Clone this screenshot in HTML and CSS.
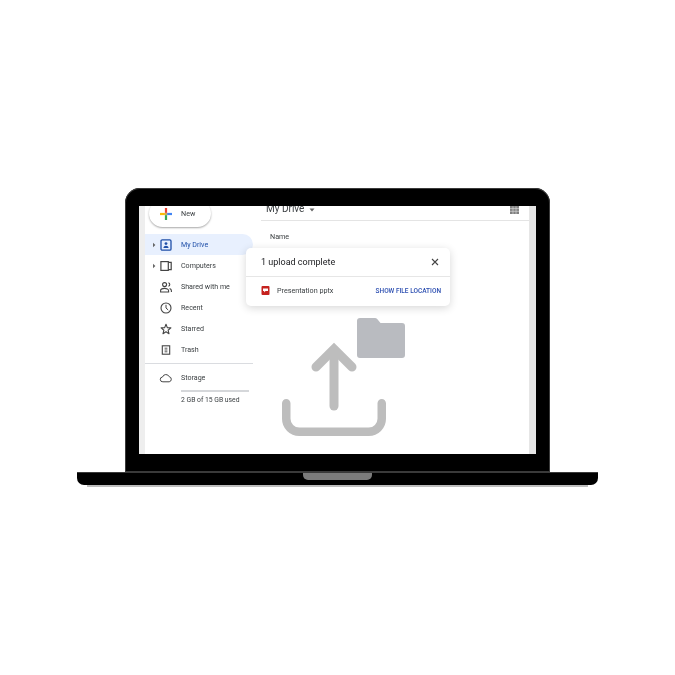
FILE: index.html
```html
<!DOCTYPE html>
<html lang="en">
<head>
<meta charset="utf-8">
<title>Drive upload</title>
<link rel="stylesheet" href="styles.css">
</head>
<body>
<div class="laptop">
  <div class="lid">
    <div class="screen">
      <aside class="sidebar">
        <div class="new-row">
          <div class="new-btn">
            <svg class="plus" viewBox="0 0 13 13"><rect x="5.300" y="0" width="2.400" height="5.300" fill="#ea4335"/><rect x="7.700" y="5.300" width="5.300" height="2.400" fill="#4285f4"/><rect x="5.300" y="7.700" width="2.400" height="5.300" fill="#34a853"/><rect x="0" y="5.300" width="5.300" height="2.400" fill="#fbbc05"/><rect x="5.300" y="5.300" width="2.400" height="2.400" fill="#c9a95a"/></svg>
            <span>New</span>
          </div>
        </div>
        <nav class="nav">
          <div class="nav-item active">
            <svg class="caret" viewBox="0 0 4 6"><path d="M1 .8 3.400 3 1 5.200z"/></svg>
            <svg class="ico" viewBox="0 0 14 14"><rect x="2" y="1.800" width="10" height="10.400" rx="1.200" fill="none" stroke="#1f4fa8" stroke-width="1.300"/><circle cx="7" cy="5.600" r="1.400" fill="#1f4fa8"/><path d="M4.400 10c.2-1.500 1.300-2.200 2.600-2.200s2.400.7 2.600 2.200z" fill="#1f4fa8"/></svg>
            <span class="label">My Drive</span>
          </div>
          <div class="nav-item">
            <svg class="caret" viewBox="0 0 4 6"><path d="M1 .8 3.400 3 1 5.200z"/></svg>
            <svg class="ico" viewBox="0 0 14 14"><rect x="1.900" y="2.600" width="7.400" height="8.800" fill="none" stroke="#444" stroke-width="1.200"/><path d="M9.300 3.400h2.900v7.200H9.300" fill="none" stroke="#444" stroke-width="1.200"/></svg>
            <span class="label">Computers</span>
          </div>
          <div class="nav-item">
            <svg class="ico" viewBox="0 0 14 14"><circle cx="5.600" cy="4.600" r="2" fill="none" stroke="#444" stroke-width="1.100"/><path d="M1.600 12v-1.300c0-1.500 2.200-2.300 4-2.300s4 .8 4 2.300V12z" fill="none" stroke="#444" stroke-width="1.100"/><path d="M9.400 2.800a1.800 1.800 0 0 1 0 3.500M10.600 8.600c1.100.4 1.800 1.100 1.800 2.100V12" fill="none" stroke="#444" stroke-width="1.100"/></svg>
            <span class="label">Shared with me</span>
          </div>
          <div class="nav-item">
            <svg class="ico" viewBox="0 0 14 14"><circle cx="7" cy="7" r="5" fill="none" stroke="#444" stroke-width="1.100"/><path d="M7 3.800V7l2.200 2" fill="none" stroke="#444" stroke-width="1"/></svg>
            <span class="label">Recent</span>
          </div>
          <div class="nav-item">
            <svg class="ico" viewBox="0 0 14 14"><path d="M7 2.200 8.300 5.600l3.600.3-2.800 2.300.9 3.500L7 9.800l-3 1.900.9-3.500-2.800-2.300 3.600-.3z" fill="none" stroke="#444" stroke-width="1.100" stroke-linejoin="round"/></svg>
            <span class="label">Starred</span>
          </div>
          <div class="nav-item">
            <svg class="ico" viewBox="0 0 14 14"><rect x="3.300" y="2.800" width="7.400" height="8.400" fill="none" stroke="#444" stroke-width="1.100"/><path d="M5.600 5.200h2.800M5.600 7h2.800M5.600 8.800h2.800" stroke="#444" stroke-width=".9"/></svg>
            <span class="label">Trash</span>
          </div>
        </nav>
        <div class="storage">
          <div class="nav-item">
            <svg class="ico" viewBox="0 0 14 14"><path d="M3.900 10.800A2.400 2.400 0 0 1 3.500 6 3.600 3.600 0 0 1 10.200 5.700 2.600 2.600 0 0 1 10.200 10.800z" fill="none" stroke="#444" stroke-width="1"/></svg>
            <span class="label">Storage</span>
          </div>
          <div class="meter"></div>
          <div class="used">2 GB of 15 GB used</div>
        </div>
      </aside>
      <main class="main">
        <div class="title-row">
          <span class="title">My Drive</span>
          <svg class="title-caret" viewBox="0 0 6 4"><path d="M.5.500h5L3 3.500z"/></svg>
          <svg class="grid-ico" viewBox="0 0 10 10"><path d="M0 0h10v10H0z" fill="#808080"/><path d="M3.300 1.500v8.500M6.700 1.500v8.500M0 4h10M0 7h10" stroke="#ddd" stroke-width=".7"/></svg>
        </div>
        <div class="col-head">Name</div>
      </main>
      <div class="upload-card">
        <div class="card-head">
          <span>1 upload complete</span>
          <svg class="close" viewBox="0 0 8 8"><path d="M1 1l6 6M7 1 1 7" stroke="#444" stroke-width="1.100"/></svg>
        </div>
        <div class="card-row">
          <svg class="file" viewBox="0 0 9 9"><rect width="8" height="9" rx="1" x=".5" fill="#c5221f"/><path d="M2 2.500h5v2.400H4.500L3.200 6.500V4.900H2z" fill="#fff"/></svg>
          <span class="file-name">Presentation pptx</span>
          <span class="file-link">SHOW FILE LOCATION</span>
        </div>
      </div>
      <svg class="upload-art" viewBox="0 0 124 120">
        <path d="M76 5a3 3 0 0 1 3-3h15a3 3 0 0 1 2.200 1l3.300 4H121a3 3 0 0 1 3 3v29a3 3 0 0 1-3 3H79a3 3 0 0 1-3-3z" fill="#b9bbc0"/>
        <path d="M53 90V34" fill="none" stroke="#bdbdbd" stroke-width="9" stroke-linecap="round"/>
        <path d="M35 51l18-18 18 18" fill="none" stroke="#bdbdbd" stroke-width="9" stroke-linecap="round" stroke-linejoin="miter"/>
        <path d="M5.250 87.250V102.750a13 13 0 0 0 13 13h69.500a13 13 0 0 0 13-13V87.250" fill="none" stroke="#bdbdbd" stroke-width="8.500" stroke-linecap="round"/>
      </svg>
    </div>
  </div>
  <div class="base"><div class="notch"></div></div>
  <div class="base-shadow"></div>
</div>
</body>
</html>
```
FILE: styles.css
```css
* { box-sizing: border-box; }
html, body { margin: 0; height: 100%; }
body {
  background: #fff;
  font-family: Roboto, "Liberation Sans", sans-serif;
  color: #3c4043;
  padding-top: 188px;
}
.laptop { width: 521px; margin-left: 77px; display: flex; flex-direction: column; align-items: center; }
.lid {
  width: 425px;
  height: 284px;
  background: #000;
  border-radius: 15px 15px 0 0;
  padding: 18px 14px;
  box-shadow: inset 0 0 0 1px #3a3a3a;
}
.screen {
  position: relative;
  width: 397px;
  height: 248px;
  background: #fff;
  display: flex;
  overflow: hidden;
  border-left: 6px solid #eeeeee;
  border-right: 7px solid #e6e6e6;
}
.sidebar { width: 108px; flex: none; display: flex; flex-direction: column; filter: blur(.35px); }
.new-row { height: 22px; padding-left: 4px; }
.new-btn {
  width: 62px;
  height: 27px;
  margin-top: -6px;
  border-radius: 14px;
  background: #fff;
  box-shadow: 0 1px 2px rgba(0,0,0,.35);
  display: flex;
  align-items: center;
  gap: 9px;
  padding-left: 11px;
  font-size: 7.200px;
}
.plus { width: 12px; height: 12px; }
.nav { margin-top: 6px; display: flex; flex-direction: column; }
.nav-item {
  height: 21px;
  display: grid;
  grid-template-columns: 7px 14px auto;
  align-items: center;
  font-size: 7.100px;
  padding-left: 7px;
  border-radius: 0 11px 11px 0;
}
.label { grid-column: 3; margin-left: 8px; white-space: nowrap; }
.nav-item.active { background: #e8f0fe; color: #1f4fa8; }
.caret { grid-column: 1; width: 4px; height: 6px; fill: #666; }
.ico { grid-column: 2; width: 14px; height: 14px; }
.storage { margin-top: 3px; border-top: 1px solid #dadce0; padding-top: 3px; }
.meter { height: 2px; background: #d5d7da; margin: 2px 4px 0 36px; }
.used { font-size: 6.800px; margin: 4px 0 0 36px; white-space: nowrap; }
.main { flex: 1; display: flex; flex-direction: column; padding: 0 0 0 8px; filter: blur(.35px); }
.title-row {
  height: 15px;
  border-bottom: 1px solid #e4e4e4;
  display: flex;
  align-items: flex-end;
  padding: 0 10px 5px 5px;
}
.title { font-size: 10px; line-height: 10px; position: relative; top: -1px; }
.title-caret { width: 6px; height: 4px; fill: #666; margin: 0 0 3px 5px; }
.grid-ico { width: 9px; height: 9px; margin-left: auto; margin-bottom: 1px; }
.col-head { font-size: 7.200px; padding: 11px 0 0 9px; }
.upload-card {
  position: absolute;
  left: 101px;
  top: 42px;
  width: 204px;
  height: 58px;
  background: #fff;
  border-radius: 5px;
  box-shadow: 0 2px 8px rgba(0,0,0,.16);
  display: flex;
  flex-direction: column;
  filter: blur(.3px);
}
.card-head {
  height: 29px;
  border-bottom: 1px solid #e6e6e6;
  display: flex;
  align-items: center;
  justify-content: space-between;
  padding: 0 11px 0 15px;
  font-size: 9px;
  color: #202124;
}
.close { width: 8px; height: 8px; }
.card-row { flex: 1; display: flex; align-items: center; padding: 0 9px 2px 15px; font-size: 7.200px; }
.file { width: 9px; height: 9px; }
.file-name { margin-left: 7px; }
.file-link { margin-left: auto; color: #2a4db0; font-size: 6.500px; font-weight: 500; }
.upload-art { position: absolute; left: 136px; top: 110px; width: 124px; height: 120px; }
.base {
  width: 521px;
  height: 13px;
  background: #000;
  border-top: 1px solid #3a3a3a;
  border-radius: 0 0 7px 7px;
  display: flex;
  justify-content: center;
  position: relative;
  z-index: 1;
}
.notch { width: 69px; height: 7px; background: #7c7c7c; border-radius: 0 0 5px 5px; }
.base-shadow { width: 501px; height: 2px; background: #bdbdbd; }
```
